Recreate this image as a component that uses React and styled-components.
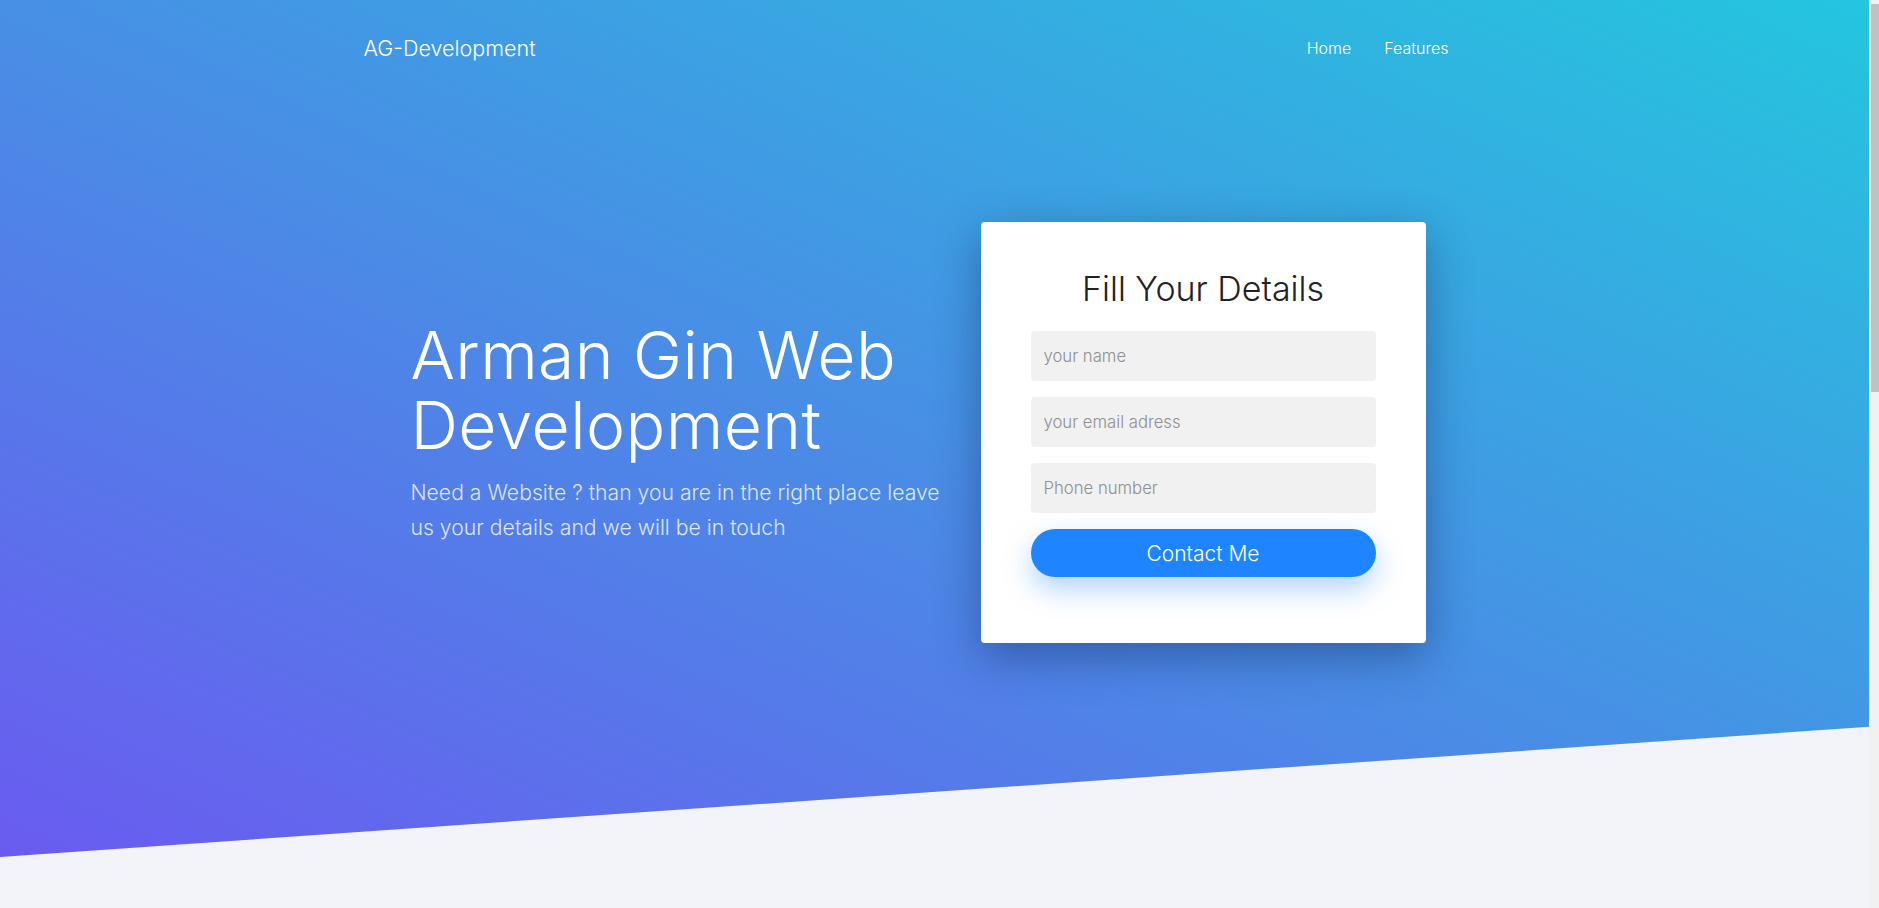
import React from 'react';
import styled, { createGlobalStyle } from 'styled-components';

const GlobalStyle = createGlobalStyle`
    * {
        box-sizing: border-box;
    }

    html, body {
        margin: 0;
        padding: 0;
    }

    body {
        background: #f3f4f9;
        font-family: Inter, "Open Sans", sans-serif;
        font-weight: 300;
        padding-right: 10px;
        -webkit-font-smoothing: antialiased;
    }
`;

// the page scrollbar as it shows in the screenshot
const ScrollTrack = styled.div`
    position: fixed;
    top: 0;
    right: 0;
    width: 10px;
    height: 100vh;
    background: #f1f1f1;
    padding: 4px 0 0 2px;
`;

const ScrollThumb = styled.div`
    height: 388px;
    background: #c1c1c1;
`;

const Hero = styled.header`
    height: 857px;
    background: linear-gradient(to right top, #6a5bf0 0%, #4b8ae6 45%, #24c6de 100%);
    clip-path: polygon(0 0, 100% 0, 100% 84.8%, 0 100%);
`;

const Container = styled.div`
    width: 1140px;
    margin: 0 auto;
`;

const Navbar = styled(Container)`
    height: 96px;
    display: flex;
    align-items: center;
    justify-content: space-between;
    padding: 0 56px 0 0;
`;

const Brand = styled.a`
    color: #fff;
    font-size: 21.5px;
    font-weight: 300;
    text-decoration: none;
    margin-left: -1px;
`;

const NavList = styled.nav`
    display: flex;
    gap: 33px;
`;

const NavLink = styled.a`
    color: #fff;
    font-size: 16px;
    font-weight: 300;
    text-decoration: none;
`;

const HeroBody = styled(Container)`
    display: grid;
    grid-template-columns: 570px 570px;
    align-items: center;
    margin-top: 126px;
`;

const Column = styled.div`
    padding-left: 46px;
`;

const Title = styled.h1`
    margin: 0;
    color: #fff;
    font-size: 66px;
    line-height: 70px;
    font-weight: 300;
    letter-spacing: 0.4px;
`;

const Lead = styled.p`
    margin: 15px 0 0;
    width: 545px;
    color: rgba(255, 255, 255, 0.82);
    font-size: 21.2px;
    line-height: 35px;
    font-weight: 300;
`;

const Card = styled.form`
    width: 445px;
    background: #fff;
    border-radius: 4px;
    padding: 46px 50px 66px;
    box-shadow: 0 14px 45px rgba(20, 40, 90, 0.45);
    display: flex;
    flex-direction: column;
    gap: 16px;
`;

const CardTitle = styled.h2`
    margin: 0 0 6px;
    text-align: center;
    color: #222;
    font-size: 34px;
    line-height: 41px;
    font-weight: 300;
`;

const Field = styled.input`
    width: 100%;
    height: 50px;
    border: none;
    border-radius: 4px;
    background: #f1f1f1;
    padding: 0 13px;
    font-family: inherit;
    font-size: 16.7px;
    font-weight: 300;
    color: #333;
    outline: none;

    &::placeholder {
        color: #8f8f8f;
    }
`;

const Button = styled.button`
    height: 48px;
    border: none;
    border-radius: 24px;
    background: #1f84ff;
    color: #fff;
    font-family: inherit;
    font-size: 21px;
    font-weight: 300;
    box-shadow: 0 12px 28px rgba(31, 132, 255, 0.35);
    cursor: pointer;
`;

const Below = styled.section`
    height: 1300px;
`;

export default function App() {
    return (
        <>
            <GlobalStyle />
            <Hero>
                <Navbar>
                    <Brand href="#">AG-Development</Brand>
                    <NavList>
                        <NavLink href="#">Home</NavLink>
                        <NavLink href="#">Features</NavLink>
                    </NavList>
                </Navbar>

                <HeroBody>
                    <Column>
                        <Title>Arman Gin Web Development</Title>
                        <Lead>
                            Need a Website ? than you are in the right place leave us your details and we will be in touch
                        </Lead>
                    </Column>

                    <Column>
                        <Card onSubmit={ e => e.preventDefault() }>
                            <CardTitle>Fill Your Details</CardTitle>
                            <Field type="text" placeholder="your name" />
                            <Field type="email" placeholder="your email adress" />
                            <Field type="text" placeholder="Phone number" />
                            <Button type="submit">Contact Me</Button>
                        </Card>
                    </Column>
                </HeroBody>
            </Hero>
            <Below />
            <ScrollTrack>
                <ScrollThumb />
            </ScrollTrack>
        </>
    );
}
